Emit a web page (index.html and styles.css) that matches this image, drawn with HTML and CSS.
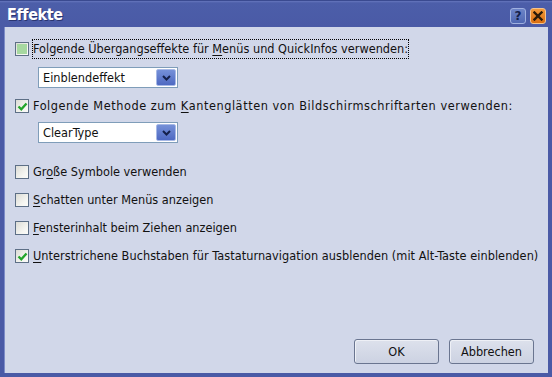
FILE: index.html
```html
<!DOCTYPE html>
<html lang="de">
<head>
<meta charset="utf-8">
<title>Effekte</title>
<link rel="stylesheet" href="styles.css">
</head>
<body>
<div class="window">
  <div class="titlebar">
    <span class="title">Effekte</span>
    <div class="tbuttons">
      <span class="tbtn help">?</span>
      <span class="tbtn close"><svg width="10" height="10" viewBox="0 0 10 10"><path d="M1.5 1.5 L8.5 8.5 M8.5 1.5 L1.5 8.5" stroke="#2a1a08" stroke-width="2.4" stroke-linecap="square"/></svg></span>
    </div>
  </div>
  <div class="body">
    <div class="row r1">
      <span class="cb partial"><span class="fill"></span></span>
      <span class="label focus">Folgende Übergangseffekte für <u>M</u>enüs und QuickInfos verwenden:</span>
    </div>
    <div class="combo c1">
      <span class="ctext">Einblendeffekt</span>
      <span class="arrow"><svg width="9" height="6" viewBox="0 0 9 6"><path d="M1 1 L4.5 4.5 L8 1" fill="none" stroke="#14204a" stroke-width="2"/></svg></span>
    </div>
    <div class="row r2">
      <span class="cb checked"><svg width="11" height="11" viewBox="0 0 11 11"><path d="M1.5 5.5 L4.3 8.3 L9.5 2.5" fill="none" stroke="#22a52a" stroke-width="2.3"/></svg></span>
      <span class="label wide">Folgende Methode zum <u>K</u>antenglätten von Bildschirmschriftarten verwenden:</span>
    </div>
    <div class="combo c2">
      <span class="ctext">ClearType</span>
      <span class="arrow"><svg width="9" height="6" viewBox="0 0 9 6"><path d="M1 1 L4.5 4.5 L8 1" fill="none" stroke="#14204a" stroke-width="2"/></svg></span>
    </div>
    <div class="row r3">
      <span class="cb"></span>
      <span class="label">Gr<u>o</u>ße Symbole verwenden</span>
    </div>
    <div class="row r4">
      <span class="cb"></span>
      <span class="label"><u>S</u>chatten unter Menüs anzeigen</span>
    </div>
    <div class="row r4">
      <span class="cb"></span>
      <span class="label"><u>F</u>ensterinhalt beim Ziehen anzeigen</span>
    </div>
    <div class="row r4">
      <span class="cb checked"><svg width="11" height="11" viewBox="0 0 11 11"><path d="M1.5 5.5 L4.3 8.3 L9.5 2.5" fill="none" stroke="#22a52a" stroke-width="2.3"/></svg></span>
      <span class="label last"><u>U</u>nterstrichene Buchstaben für Tastaturnavigation ausblenden (mit Alt-Taste einblenden)</span>
    </div>
    <div class="buttons">
      <span class="btn">OK</span>
      <span class="btn">Abbrechen</span>
    </div>
  </div>
</div>
</body>
</html>
```
FILE: styles.css
```css
html, body {
  margin: 0;
  padding: 0;
  background: #d1d7e9;
}
.window {
  width: 552px;
  height: 377px;
  display: flex;
  flex-direction: column;
  font-family: "DejaVu Sans Condensed", "DejaVu Sans", sans-serif;
  font-size: 12.6px;
  color: #111;
  box-sizing: border-box;
}
.titlebar {
  height: 27px;
  flex: none;
  display: flex;
  align-items: center;
  justify-content: space-between;
  padding: 0 6px 0 7px;
  background: linear-gradient(#6576bd 0, #4c5ea9 2px, #4a5aa6 100%);
  border-top: 1px solid #3a4a90;
  box-sizing: border-box;
}
.title {
  color: #fff;
  font-family: "DejaVu Sans Condensed", "DejaVu Sans", sans-serif;
  font-weight: bold;
  font-size: 16px;
  letter-spacing: -0.4px;
  text-shadow: 1px 1px 0 #2a3570;
  margin-top: 1px;
}
.tbuttons {
  display: flex;
  gap: 4px;
  margin-top: 4px;
}
.tbtn {
  width: 16px;
  height: 16px;
  box-sizing: border-box;
  border-radius: 3px;
  display: flex;
  align-items: center;
  justify-content: center;
}
.help {
  background: linear-gradient(#6d84c8, #4f67b3);
  border: 1px solid #9fb0e0;
  color: #14204a;
  font-weight: bold;
  font-size: 12px;
  font-family: "DejaVu Sans", sans-serif;
}
.close {
  background: linear-gradient(#f29a3a, #d96d10);
  border: 1px solid #f6c38a;
}
.body {
  flex: 1;
  display: flex;
  flex-direction: column;
  border: 4px solid #4a5aa6;
  border-top: none;
  padding: 0 0 9px 11px;
  background: #d1d7e9;
  box-shadow: inset 1px 0 0 #7d8cc8;
}
.row {
  display: flex;
  align-items: center;
  height: 18px;
  gap: 4px;
}
.r1 { margin-top: 13px; }
.r2 { margin-top: 9px; }
.r3 { margin-top: 20px; }
.r4 { margin-top: 10px; }
.cb {
  width: 14px;
  height: 14px;
  box-sizing: border-box;
  border: 1px solid #5d6f86;
  background: linear-gradient(135deg, #dcdcd6, #f6f6f2 70%, #fbfbf8);
  display: flex;
  align-items: center;
  justify-content: center;
  flex: none;
}
.cb .fill {
  width: 10px;
  height: 10px;
  background: #a6d8a0;
}
.label {
  padding: 1px 0 2px;
  white-space: nowrap;
  border: 1px dotted transparent;
  margin-left: -1px;
}
.label.focus {
  border-color: #000;
}
.label.wide {
  letter-spacing: 0.56px;
}
.label.last {
  letter-spacing: 0.05px;
}
u {
  text-decoration: underline;
  text-underline-offset: 2px;
}
.combo {
  margin: 9px 0 0 23px;
  width: 140px;
  height: 21px;
  box-sizing: border-box;
  border: 1px solid #7f9db9;
  background: #fff;
  display: flex;
  align-items: center;
  justify-content: space-between;
  padding: 0 1px 0 4px;
}
.c2 { margin-top: 7px; }
.arrow {
  width: 20px;
  height: 17px;
  box-sizing: border-box;
  border: 1px solid #a6b8e6;
  border-radius: 2px;
  background: linear-gradient(#7590d8, #4e69c2);
  display: flex;
  align-items: center;
  justify-content: center;
}
.buttons {
  margin-top: auto;
  display: flex;
  justify-content: flex-end;
  gap: 10px;
  padding-right: 14px;
}
.btn {
  width: 85px;
  height: 25px;
  box-sizing: border-box;
  border: 1px solid #6a7590;
  border-radius: 3px;
  background: linear-gradient(#dde1ec, #ccd2e2);
  box-shadow: inset 1px 1px 0 #eef0f6;
  display: flex;
  align-items: center;
  justify-content: center;
}
```
